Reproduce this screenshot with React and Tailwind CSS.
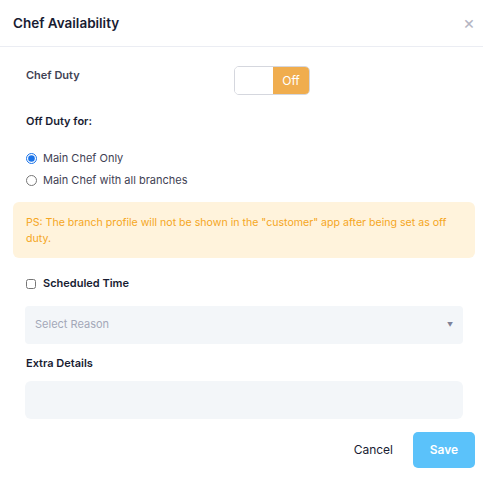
import React from "react";

export default function App() {
  return (
    <div className="w-[483px] h-[498px] bg-white text-[#1e1e2d]" style={{ fontFamily: "Inter, 'Noto Sans', sans-serif" }}>
      <div className="flex items-center justify-between h-[47px] pl-[13px] pr-[8px] border-b border-[#ebedf3]">
        <h2 className="text-[13.5px] font-semibold text-[#181c32]">Chef Availability</h2>
        <span className="text-[#b5b5c3] text-[18px] leading-none">×</span>
      </div>
      <div className="pl-[13px] pr-[8px]">
        <div className="flex items-start pt-[19px] pl-[13px]">
          <div className="w-[208px] text-[11px] font-semibold text-[#3f4254] pt-[1px]">Chef Duty</div>
          <div className="flex w-[76px] h-[29px] border border-[#d5d7de] rounded-[5px] overflow-hidden">
            <div className="w-[38px] bg-white" />
            <div className="flex-1 bg-[#f0ad4e] text-white text-[12px] flex items-center justify-center">Off</div>
          </div>
        </div>
        <div className="pl-[13px] mt-[18px] text-[11px] font-semibold text-[#181c32]">Off Duty for:</div>
        <div className="pl-[13px] mt-[22px] flex flex-col gap-[8px] text-[11px] text-[#3f4254]">
          <label className="flex items-center gap-[6px] h-[14px]">
            <input type="radio" name="r" defaultChecked className="m-0 w-[11px] h-[11px] accent-[#1a73e8]" />
            Main Chef Only
          </label>
          <label className="flex items-center gap-[6px] h-[14px]">
            <input type="radio" name="r" className="m-0 w-[11px] h-[11px]" />
            Main Chef with all branches
          </label>
        </div>
        <div className="mt-[14px] h-[56px] rounded-[6px] bg-[#fff3dc] text-[#f5a623] text-[10.6px] leading-[16px] pl-[13px] pr-[8px] pt-[13px]">
          PS: The branch profile will not be shown in the "customer" app after being set as off duty.
        </div>
        <label className="pl-[13px] mt-[19px] flex items-center gap-[7px] h-[14px] text-[11px] font-semibold text-[#181c32]">
          <input type="checkbox" className="m-0 w-[10px] h-[10px]" />
          Scheduled Time
        </label>
        <div className="ml-[12px] mr-[12px] mt-[15px] h-[38px] rounded-[4px] bg-[#f3f6f9] flex items-center justify-between pl-[10px] pr-[10px]">
          <span className="text-[11px] text-[#a3a8b8]">Select Reason</span>
          <span className="text-[6px] text-[#7e8299]">▼</span>
        </div>
        <div className="pl-[13px] mt-[11px] text-[11px] font-semibold text-[#181c32]">Extra Details</div>
        <div className="ml-[12px] mr-[12px] mt-[10px] h-[38px] rounded-[6px] bg-[#f3f6f9]" />
        <div className="flex justify-end items-center mt-[13px] gap-[20px]">
          <span className="text-[12px] text-[#181c32]">Cancel</span>
          <button className="w-[62px] h-[36px] rounded-[5px] bg-[#5bc2fa] text-white text-[12px] font-semibold">Save</button>
        </div>
      </div>
    </div>
  );
}
